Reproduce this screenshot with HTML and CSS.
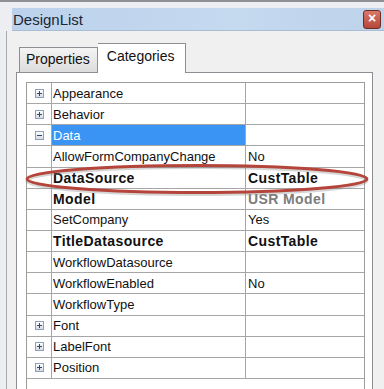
FILE: index.html
```html
<!DOCTYPE html>
<html>
<head>
    <title>DesignList</title>
    <link rel="stylesheet" href="styles.css">
</head>
<body>
    <div class="window">
        <div class="titlebar">
            <span class="title">DesignList</span>
            <span class="close">&#215;</span>
        </div>
        <div class="content">
            <div class="tabs">
                <div class="tab">Properties</div>
                <div class="tab active">Categories</div>
            </div>
            <div class="panel">
                <div class="grid">
                    <div class="row"><div class="ico"><span class="exp plus"></span></div><div class="name">Appearance</div><div class="val"></div></div>
                    <div class="row"><div class="ico"><span class="exp plus"></span></div><div class="name">Behavior</div><div class="val"></div></div>
                    <div class="row"><div class="ico"><span class="exp"></span></div><div class="name selected">Data</div><div class="val"></div></div>
                    <div class="row"><div class="ico"></div><div class="name">AllowFormCompanyChange</div><div class="val">No</div></div>
                    <div class="row bold"><div class="ico"></div><div class="name">DataSource</div><div class="val">CustTable</div></div>
                    <div class="row bold"><div class="ico"></div><div class="name">Model</div><div class="val muted">USR Model</div></div>
                    <div class="row"><div class="ico"></div><div class="name">SetCompany</div><div class="val">Yes</div></div>
                    <div class="row bold"><div class="ico"></div><div class="name">TitleDatasource</div><div class="val">CustTable</div></div>
                    <div class="row"><div class="ico"></div><div class="name">WorkflowDatasource</div><div class="val"></div></div>
                    <div class="row"><div class="ico"></div><div class="name">WorkflowEnabled</div><div class="val">No</div></div>
                    <div class="row"><div class="ico"></div><div class="name">WorkflowType</div><div class="val"></div></div>
                    <div class="row"><div class="ico"><span class="exp plus"></span></div><div class="name">Font</div><div class="val"></div></div>
                    <div class="row"><div class="ico"><span class="exp plus"></span></div><div class="name">LabelFont</div><div class="val"></div></div>
                    <div class="row"><div class="ico"><span class="exp plus"></span></div><div class="name">Position</div><div class="val"></div></div>
                </div>
            </div>
        </div>

        <!-- red marker drawn round the DataSource row -->
        <svg class="mark" width="384" height="389" viewBox="0 0 384 389">
            <ellipse cx="197" cy="179" rx="170" ry="13.5" fill="none" stroke="#8a8a8a" stroke-width="3" opacity="0.35"/>
            <ellipse cx="197" cy="177" rx="170" ry="13.5" fill="none" stroke="#b5453a" stroke-width="3"/>
        </svg>
    </div>
</body>
</html>
```

FILE: styles.css
```css
html, body {
    margin: 0;
    padding: 0;
    height: 100%;
    overflow: hidden;
}

body {
    font-family: "Liberation Sans", Arial, sans-serif;
    background: #e4e7eb;
}

.window {
    position: relative;
    height: 389px;
    box-sizing: border-box;
    border-top: 2px solid #8e9196;
    padding: 6px 0 0 6px;
    background: #eceef1;
}

.titlebar {
    display: flex;
    align-items: center;
    justify-content: space-between;
    height: 22px;
    margin-left: 6px;
    padding: 0 3px 0 1px;
    background: linear-gradient(to right, #bcd2ec, #c5d9ef 60%, #bdd3ea);
    border-bottom: 1px solid #a9bdd3;
}

.title {
    font-size: 15px;
    color: #1b2533;
}

.close {
    width: 16px;
    height: 17px;
    line-height: 15px;
    text-align: center;
    font-size: 14px;
    font-weight: bold;
    color: #fff;
    background: linear-gradient(#d9786a, #b5473a);
    border: 1px solid #6e2b24;
    border-radius: 3px;
}

.content {
    height: 358px;
    border-left: 1px solid #a7abb0;
    background: #f0f0f0;
    padding: 12px 0 0 9px;
    box-sizing: border-box;
}

.tabs {
    display: flex;
    align-items: flex-end;
    height: 29px;
    padding-left: 3px;
}

.tab {
    box-sizing: border-box;
    height: 25px;
    padding: 3px 7px 0 6px;
    font-size: 14px;
    color: #111;
    background: linear-gradient(#f4f4f4, #dcdcdc);
    border: 1px solid #8c8e94;
    border-bottom: none;
}

.tab.active {
    height: 30px;
    margin-bottom: -1px;
    padding: 4px 10px 0 9px;
    background: #fff;
    border-left: none;
    position: relative;
    z-index: 1;
}

.panel {
    width: 357px;
    height: 317px;
    box-sizing: border-box;
    border: 1px solid #8c8e94;
    border-bottom: none;
    background: #fff;
    padding: 9px 7px 0 9px;
}

.grid {
    height: 100%;
    box-sizing: border-box;
    border: 1px solid #9c9c9c;
    border-bottom: none;
}

.row {
    display: grid;
    grid-template-columns: 25px 194px 1fr;
    height: 21.15px;
    box-sizing: border-box;
    border-bottom: 1px solid #a6a6a6;
    font-size: 13px;
    color: #111;
}

.row > div {
    display: flex;
    align-items: center;
    box-sizing: border-box;
    white-space: nowrap;
    overflow: hidden;
}

.ico,
.name {
    border-right: 1px solid #a6a6a6;
}

.ico {
    justify-content: center;
    padding-left: 1px;
}

.name {
    padding-left: 1px;
}

.val {
    padding-left: 2px;
}

.selected {
    background: #3a94f3;
    color: #fff;
}

.bold {
    font-weight: bold;
    font-size: 14px;
    letter-spacing: 0.4px;
}

.muted {
    color: #7c7c7c;
}

.exp {
    position: relative;
    width: 9px;
    height: 9px;
    box-sizing: border-box;
    border: 1px solid #8ea0b8;
    background: linear-gradient(#ffffff, #d5dbe3);
}

.exp::before {
    content: "";
    position: absolute;
    left: 1px;
    top: 3px;
    width: 5px;
    height: 1px;
    background: #2f4a6e;
}

.exp.plus::after {
    content: "";
    position: absolute;
    left: 3px;
    top: 1px;
    width: 1px;
    height: 5px;
    background: #2f4a6e;
}

.mark {
    position: absolute;
    left: 0;
    top: 0;
    pointer-events: none;
}
```
